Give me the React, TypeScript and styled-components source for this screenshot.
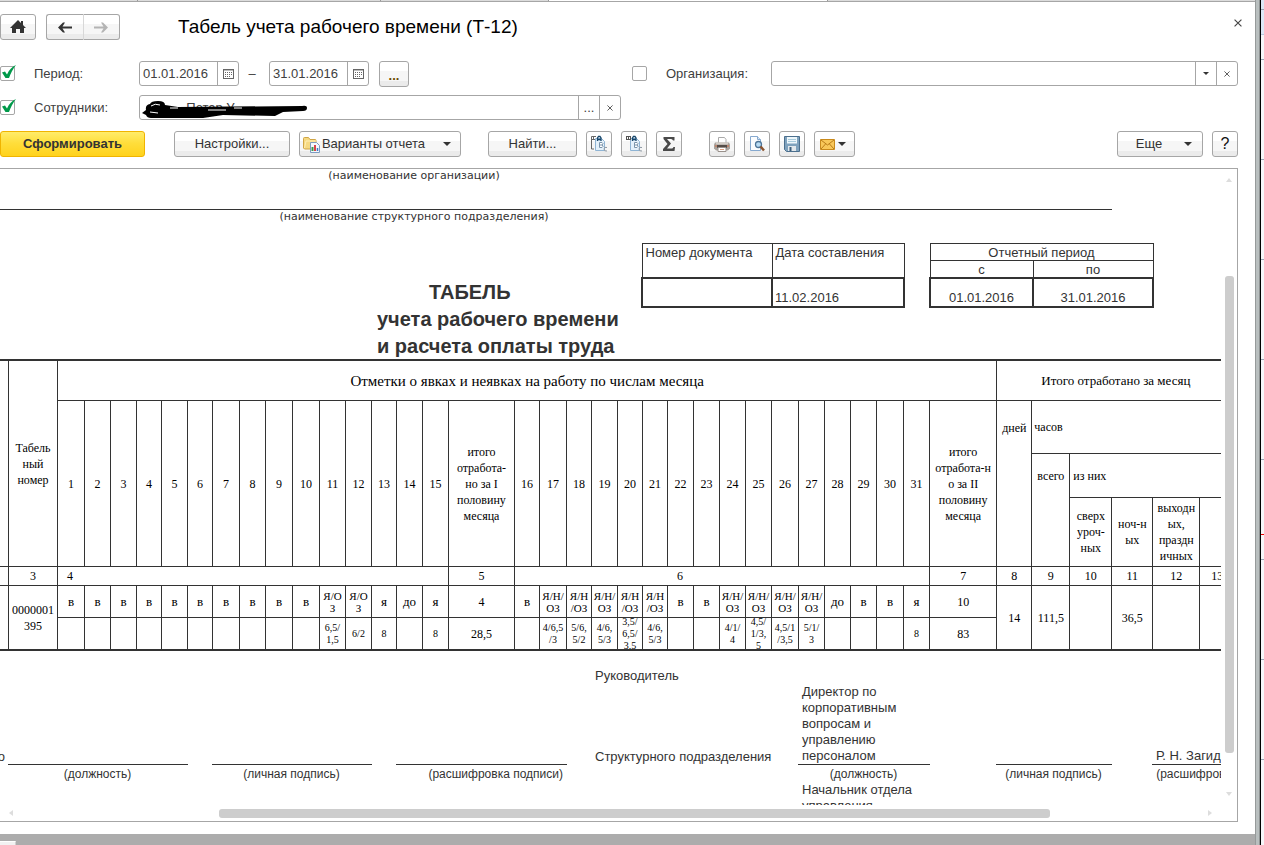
import React from "react";
import styled, { createGlobalStyle } from "styled-components";

const SANS = `"Liberation Sans", Arial, sans-serif`;
const SERIF = `"Liberation Serif", "Times New Roman", serif`;
const LINE = "#333";
const EDGE = "#a6a6a6";

const Global = createGlobalStyle`
  *, *::before, *::after { box-sizing: border-box; }
  html, body, #root { margin: 0; height: 100%; }
  body { background: #fff; color: #404040; font: 13px/16px ${SANS}; overflow: hidden; }
  button, input { font: inherit; color: inherit; margin: 0; }
`;

/* ---------- window frame ---------- */

const Desktop = styled.div`
  display: grid;
  grid-template-columns: minmax(0, 1fr) 6px 3px;
  height: 100vh;
`;

const AppColumn = styled.div`
  display: flex;
  flex-direction: column;
  min-height: 0;
`;

const TabStrip = styled.div`
  display: flex;
  flex: none;
  height: 2px;
  background: #dcdcdc;
  border-bottom: 1px solid ${EDGE};
`;

const TabEdge = styled.span<{ $w: number; $active?: boolean }>`
  width: ${(p) => p.$w}px;
  border-right: 1px solid #999;
  background: ${(p) => (p.$active ? "#fff" : "none")};
`;

const FrameEdge = styled.div`
  background: #b9bfbf;
  border-left: 1px solid #969a9a;
  border-right: 1px solid #000;
  box-shadow: inset -1px 0 #8f9494;
`;

const BackWindow = styled.div`
  background:
    linear-gradient(#e00, #e00) 0 534px / 100% 1px no-repeat,
    linear-gradient(#9aa5b5, #9aa5b5) 0 9px / 100% 1px no-repeat,
    linear-gradient(#b9c9e0, #b9c9e0) 0 34px / 100% 1px no-repeat,
    linear-gradient(#dde8f6, #dde8f6) 0 0 / 100% 34px no-repeat,
    repeating-linear-gradient(#f6f6f9 0 59px, #9aa5b5 59px 60px, #f6f6f9 60px 100px);
`;

const Page = styled.main`
  display: flex;
  flex: 1;
  flex-direction: column;
  min-height: 0;
  padding: 12px 17px 12px 0;
`;

const BottomBar = styled.footer`
  flex: none;
  display: flex;
  align-items: flex-end;
  height: 11px;
  background: #acacac;
`;

const BottomTab = styled.div`
  width: 16px;
  height: 4px;
  background: #f2f2f2;
  border-top: 1px solid #fff;
  border-right: 1px solid #d0d0d0;
`;

/* ---------- controls ---------- */

const Button = styled.button<{ $w?: number; $primary?: boolean }>`
  display: inline-flex;
  align-items: center;
  justify-content: center;
  flex: none;
  width: ${(p) => p.$w ?? 26}px;
  height: 26px;
  padding: 0;
  color: #333;
  border: 1px solid ${(p) => (p.$primary ? "#f0b400" : EDGE)};
  border-radius: 3px;
  background: ${(p) =>
    p.$primary
      ? "linear-gradient(#ffec6a, #ffde3c 45%, #ffd21c)"
      : "linear-gradient(#fff 0 38%, #f6f6f6 38% 80%, #ebebeb 80%)"};
  font-weight: ${(p) => (p.$primary ? "bold" : "normal")};
`;

const NavGroup = styled.div`
  display: flex;
  ${Button} + ${Button} { border-left: 1px solid #d8d8d8; border-radius: 0 3px 3px 0; }
  ${Button}:first-child { border-right: 0; border-radius: 3px 0 0 3px; }
`;

const Header = styled.header`
  display: flex;
  align-items: center;
  gap: 10px;
  height: 26px;
  margin-bottom: 21px;
`;

const Title = styled.h1`
  flex: 1;
  margin: 0 0 0 48px;
  color: #000;
  font-size: 19px;
  font-weight: normal;
  line-height: 22px;
  white-space: nowrap;
`;

const CloseButton = styled.button`
  align-self: flex-start;
  width: 9px;
  height: 18px;
  padding: 0;
  border: 0;
  background: none;
  line-height: 0;
  margin-right: -4px;
`;

const Filters = styled.form`
  display: grid;
  grid-template-columns: 632px minmax(0, 1fr);
  row-gap: 9px;
`;

const FilterRow = styled.div`
  display: flex;
  align-items: center;
  height: 25px;
`;

const FilterLabel = styled.label`
  width: 105px;
  margin-left: 19px;
`;

const TickWrap = styled.span`
  position: relative;
  flex: none;
  width: 15px;
  height: 15px;
  svg { position: absolute; left: 1px; top: -1px; pointer-events: none; }
`;

const TickBox = styled.input`
  display: block;
  appearance: none;
  width: 15px;
  height: 15px;
  border: 1px solid ${EDGE};
  border-radius: 2px;
  background: #fff;
`;

const Field = styled.div<{ $w?: number }>`
  position: relative;
  display: flex;
  flex: ${(p) => (p.$w ? "none" : "1")};
  width: ${(p) => (p.$w ? `${p.$w}px` : "auto")};
  height: 25px;
  border: 1px solid ${EDGE};
  border-radius: 3px;
  background: #fff;
`;

const FieldInput = styled.input`
  flex: 1;
  min-width: 0;
  padding: 0 3px;
  border: 0;
  background: none;
  outline: 0;
`;

const FieldButton = styled.button`
  display: flex;
  align-items: center;
  justify-content: center;
  width: 21px;
  padding: 0;
  border: 0;
  border-left: 1px solid ${EDGE};
  background: none;
`;

const Dash = styled.span`
  width: 30px;
  padding-right: 4px;
  text-align: center;
`;

const Redaction = styled.svg`
  position: absolute;
  left: 2px;
  top: 3px;
`;

const Toolbar = styled.div`
  display: flex;
  align-items: center;
  gap: 9px;
  margin: 11px 0;
`;

const Gap = styled.span<{ $w: number }>`
  width: ${(p) => p.$w}px;
`;

const Spacer = styled.span`
  flex: 1;
`;

const ButtonText = styled.span<{ $left: number; $right: number }>`
  padding: 0 ${(p) => p.$right}px 0 ${(p) => p.$left}px;
  white-space: nowrap;
`;

const HelpMark = styled.span`
  font-size: 16px;
  color: #111;
`;

const DotsMark = styled.span`
  padding-top: 4px;
  color: #6b4a00;
  font-weight: bold;
`;

/* ---------- sheet ---------- */

const SheetFrame = styled.section`
  display: grid;
  flex: 1;
  min-height: 0;
  grid-template-columns: minmax(0, 1fr) 16px;
  grid-template-rows: minmax(0, 1fr) 16px;
  border: 1px solid ${EDGE};
  border-left: 0;
`;

const Viewport = styled.div`
  overflow: hidden;
  color: #333;
`;

const Sheet = styled.div`
  width: 1296px;
`;

const OrgLine = styled.p<{ $rule?: boolean }>`
  width: 1112px;
  height: ${(p) => (p.$rule ? 41 : 33)}px;
  margin: 0;
  padding-right: 284px;
  border-bottom: ${(p) => (p.$rule ? `1px solid ${LINE}` : "0")};
  font: 11px/13px "DejaVu Sans", Verdana, sans-serif;
  text-align: center;
`;

const DocHead = styled.div`
  display: flex;
  align-items: flex-start;
  height: 116px;
`;

const DocTitle = styled.h2`
  width: 641px;
  margin: 0;
  padding: 36px 0 0 377px;
  font-size: 20px;
  line-height: 27px;
  white-space: nowrap;
`;

const DocTitleTop = styled.span`
  display: block;
  padding-left: 52px;
`;

const DocTable = styled.table<{ $w: number; $center?: boolean }>`
  table-layout: fixed;
  width: ${(p) => p.$w}px;
  margin-right: 24px;
  border-collapse: collapse;
  text-align: ${(p) => (p.$center ? "center" : "left")};
  th { padding: 1px 3px 0; border: 1px solid ${LINE}; font-weight: normal; line-height: 15px; text-align: inherit; vertical-align: top; }
  td { height: 29px; padding: 0 2px; border: 2px solid ${LINE}; vertical-align: bottom; }
`;

const TimeTable = styled.table`
  table-layout: fixed;
  width: 1235px;
  border-collapse: separate;
  border-spacing: 0;
  border-top: 2px solid ${LINE};
  border-bottom: 1px solid ${LINE};
  color: #000;
  font: 12px/16px ${SERIF};
  text-align: center;
`;

type CellProps = { $size?: number; $left?: number; $right?: number };

const Cell = styled.td<CellProps>`
  padding: 0 ${(p) => p.$right ?? 0}px 0 ${(p) => p.$left ?? 0}px;
  border-right: 1px solid ${LINE};
  border-bottom: 1px solid ${LINE};
  font-size: ${(p) => p.$size ?? 12}px;
  font-weight: normal;
  text-align: ${(p) => (p.$left ? "left" : "center")};
  white-space: pre;
`;

const TopCell = styled(Cell)<{ $top: number }>`
  padding-top: ${(p) => p.$top}px;
  vertical-align: top;
`;

const Row = styled.tr<{ $h: number }>`
  height: ${(p) => p.$h}px;
`;

const Clip = styled.div<{ $size: number }>`
  display: flex;
  align-items: center;
  justify-content: center;
  height: 31px;
  overflow: hidden;
  font-size: ${(p) => p.$size}px;
  line-height: 12px;
`;

const Signatures = styled.div`
  display: grid;
  grid-template-columns: 8px 180px 24px 160px 24px 171px 28px 203px 132px 66px 116px 40px 144px;
  padding-top: 17px;
  white-space: nowrap;
`;

const SignText = styled.div<{ $col: number; $row: number }>`
  grid-column: ${(p) => p.$col};
  grid-row: ${(p) => p.$row};
  align-self: end;
`;

const ClippedLetter = styled(SignText)`
  display: flex;
  justify-content: flex-end;
  padding-right: 3px;
`;

const SignLine = styled.div<{ $col: number }>`
  grid-column: ${(p) => p.$col};
  grid-row: 2;
  display: flex;
  align-items: flex-end;
  min-height: 81px;
  padding: 0 4px;
  border-bottom: 1px solid ${LINE};
  white-space: pre;
`;

const SignCaption = styled.div<{ $col: number; $end?: boolean }>`
  grid-column: ${(p) => p.$col};
  grid-row: 3;
  height: 17px;
  padding: 1px 4px 0 3px;
  font-size: 12px;
  text-align: ${(p) => (p.$end ? "right" : "center")};
`;

const NextPost = styled.div`
  grid-column: 9;
  grid-row: 4;
  padding-left: 4px;
`;

/* ---------- scroll bars ---------- */

const ScrollBar = styled.div<{ $vertical?: boolean }>`
  display: flex;
  flex-direction: ${(p) => (p.$vertical ? "column" : "row")};
  align-items: center;
  padding: ${(p) => (p.$vertical ? "8px 0 8px" : "0 8px")};
`;

const Thumb = styled.div<{ $grow: number; $vertical?: boolean }>`
  flex: ${(p) => p.$grow} 0 0;
  ${(p) => (p.$vertical ? "width" : "height")}: 9px;
  border-radius: 3px;
  background: #cdcdcd;
`;

const Track = styled.span<{ $grow: number }>`
  flex: ${(p) => p.$grow} 0 0;
`;

/* ---------- icons ---------- */

const Cross = ({ s = 7 }: { s?: number }) => (
  <svg width={s} height={s} viewBox="0 0 7 7">
    <path d="M.5.5l6 6M6.5.5l-6 6" stroke="#444" strokeWidth="1" fill="none" />
  </svg>
);

const Caret = ({ w = 8 }: { w?: number }) => (
  <svg width={w} height={w / 2} viewBox="0 0 8 4"><path d="M0 0h8L4 4z" fill="#333" /></svg>
);

const ScrollArrow = ({ turn }: { turn: number }) => (
  <svg width="6" height="6" viewBox="0 0 6 6">
    <path d="M0 5l3-4 3 4z" fill="#ddd" transform={`rotate(${turn} 3 3)`} />
  </svg>
);

const Tick = () => (
  <svg width="15" height="14" viewBox="0 0 15 14">
    <path d="M1 7.500L4 6.500l2 3C8 5 11 1.500 15 0c-3 4-5.500 8.500-7 13H4.500z" fill="#00994a" />
  </svg>
);

const HomeIcon = () => (
  <svg width="16" height="14" viewBox="0 0 16 14">
    <path d="M8 0l3 3V1h2v4l3 3h-2v5H10V9H6v4H2V8H0z" fill="#333" />
  </svg>
);

const Arrow = ({ color, flip }: { color: string; flip?: boolean }) => (
  <svg width="15" height="11" viewBox="0 0 15 11">
    <path
      d="M0 5.500L5 .5h2L4.500 4.500H14v2H4.500L7 10.500H5z"
      fill={color}
      transform={flip ? "translate(14 0) scale(-1 1)" : undefined}
    />
  </svg>
);

const CalendarIcon = () => (
  <svg width="11" height="10" viewBox="0 0 11 10" shapeRendering="crispEdges">
    <path d="M.5.5h10v9H.5z" fill="#fff" stroke="#666" />
    <path d="M1 1.500h9" stroke="#bbb" />
    <path d="M2 3.500h7M2 5.500h7M2 7.500h5" stroke="#666" strokeDasharray="1 1" />
  </svg>
);

const FolderIcon = () => (
  <svg width="17" height="17" viewBox="0 0 17 17">
    <path d="M.5 12V2.500q0-1 1-1h4l1.500 2H12q1 0 1 1V13H1.500z" fill="#f6d981" stroke="#d0a545" />
    <path d="M1.500 12l1.500-7h10" fill="none" stroke="#ffeeb5" />
    <path d="M7.500 6.500h6l3 3v7h-9z" fill="#f3f8fd" stroke="#7d9cc0" />
    <path d="M9.500 15v-4" stroke="#3a9a4a" strokeWidth="2" />
    <path d="M12 15V9" stroke="#d8434a" strokeWidth="2" />
    <path d="M14.500 15v-3" stroke="#3c74c4" strokeWidth="1.500" />
  </svg>
);

const GroupIcon = ({ plus }: { plus?: boolean }) => (
  <svg width="18" height="18" viewBox="0 0 18 18">
    <path d="M5.500 3.500h6l3 3v9h-9z" fill="#e4f1fb" stroke="#8fb4d4" />
    {plus ? (
      <path d="M1 1.500h5M1 4.500h5M1.500 1v4M3.500 1v4M5.500 1v4" stroke="#555" fill="none" />
    ) : (
      <path d="M6 1.500H1.500V14H4M1 4.500h4M3.500 2v3" stroke="#666" fill="none" />
    )}
    <path d="M7.500 6V3l1-1.500h1.500l1 1.500v3M7.500 4.500h3" stroke="#16466b" strokeWidth="1.300" fill="none" />
    <path d="M9.500 7.500h2.500q2 1 0 2.500 2.500 1 0 2.500H9.500zM10 10h2" stroke="#7a94ab" fill="#fff" />
    <path d="M17 12.500q-3-1-3 1.500t3 2" stroke="#8f9aa5" fill="none" />
  </svg>
);

const SigmaIcon = () => (
  <svg width="12" height="14" viewBox="0 0 12 14">
    <path d="M.5 0h11v3.500H10Q9.500 2 8 2H4l4 4.500L4 11.500h4.500q1.500 0 2-1.500H12l-.5 4H0v-2l4.500-5L.5 2z" fill="#4a4a4a" />
  </svg>
);

const PrintIcon = () => (
  <svg width="16" height="15" viewBox="0 0 16 15">
    <path d="M4.500 6V.5h6l1.500 2V6" fill="#fff" stroke="#a9a9a9" />
    <path d="M1 5.500h14l1 2v4l-2 2H2l-2-2v-4z" fill="#a9a39d" />
    <path d="M2 5.500h12v2H2z" fill="#d4cec8" />
    <path d="M3 8h10v3H3z" fill="#554d48" />
    <path d="M4 10.500h8v4H4z" fill="#fff" stroke="#99908a" />
    <path d="M1 9h2M13 9h2" stroke="#d06840" />
    <path d="M6 12.500h4" stroke="#e0a080" />
  </svg>
);

const PreviewIcon = () => (
  <svg width="16" height="16" viewBox="0 0 16 16">
    <path d="M1.500.5h7l3 3v11h-10z" fill="#fbfdff" stroke="#86a9cf" />
    <path d="M8.500.5v3h3" fill="#d9e8f6" stroke="#86a9cf" />
    <circle cx="9.500" cy="8.500" r="3" fill="#b9dcf4" stroke="#4e7598" strokeWidth="1.300" />
    <path d="M11.500 10.500l3.500 4" stroke="#8a5430" strokeWidth="2.500" />
  </svg>
);

const SaveIcon = () => (
  <svg width="16" height="16" viewBox="0 0 16 16">
    <path d="M.5.5h15v15h-13l-2-2z" fill="#7fa2bd" stroke="#4b6f8d" />
    <path d="M3 1h10v6.500H3z" fill="#eef7fb" />
    <path d="M4 3.500h8M4 5.500h8" stroke="#a8cbdc" />
    <path d="M4 10h8v5H4z" fill="#e2e8ec" />
    <path d="M5.500 11h2v4h-2z" fill="#3d5f7c" />
  </svg>
);

const MailIcon = () => (
  <svg width="15" height="11" viewBox="0 0 15 11">
    <path d="M.5.5h14v10H.5z" fill="#f8c75a" stroke="#c98a1c" />
    <path d="M1 1l6.500 5L14 1M1 10l4.500-5M14 10L9.500 5" fill="none" stroke="#b97c18" />
  </svg>
);

/* ---------- data ---------- */

const colWidths = [
  9, 49, 27, 26, 26, 25, 26, 25, 27, 26, 27, 27, 26, 26, 25, 26, 26, 66, 25, 27, 25, 26, 25, 25,
  26, 26, 26, 26, 27, 26, 26, 26, 27, 26, 67, 35, 38, 42, 41, 47, 35,
];

const firstHalf = Array.from({ length: 15 }, (_, i) => String(i + 1));
const secondHalf = Array.from({ length: 16 }, (_, i) => String(i + 16));

const codes1 = ["в", "в", "в", "в", "в", "в", "в", "в", "в", "в", "Я/О\nЗ", "Я/О\nЗ", "я", "до", "я"];
const codes2 = [
  "в", "Я/Н/\nОЗ", "Я/Н\n/ОЗ", "Я/Н/\nОЗ", "Я/Н\n/ОЗ", "Я/Н\n/ОЗ", "в", "в",
  "Я/Н/\nОЗ", "Я/Н/\nОЗ", "Я/Н/\nОЗ", "Я/Н/\nОЗ", "до", "в", "в", "я",
];
const hours1 = ["", "", "", "", "", "", "", "", "", "", "6,5/\n1,5", "6/2", "8", "", "8"];
const hours2 = [
  "", "4/6,5\n/3", "5/6,\n5/2", "4/6,\n5/3", "3,5/\n6,5/\n3,5", "4/6,\n5/3", "", "",
  "4/1/\n4", "4,5/\n1/3,\n5", "4,5/1\n/3,5", "5/1/\n3", "", "", "", "8",
];

const DayHeads = ({ days }: { days: string[] }) => (
  <>{days.map((d) => <Cell as="th" key={d} rowSpan={3}>{d}</Cell>)}</>
);

const Marks = ({ items, hours }: { items: string[]; hours?: boolean }) => (
  <>
    {items.map((t, i) => (
      <Cell key={i}><Clip $size={hours ? 10 : t.includes("/") ? 11 : 13}>{t}</Clip></Cell>
    ))}
  </>
);

const DateField = ({ id, value, label }: { id: string; value: string; label?: string }) => (
  <Field $w={100}>
    <FieldInput id={id} aria-label={label} defaultValue={value} />
    <FieldButton type="button" aria-label="Выбрать дату"><CalendarIcon /></FieldButton>
  </Field>
);

export default function App() {
  return (
    <>
      <Global />
      <Desktop>
        <AppColumn>
          <TabStrip>
            <TabEdge $w={138} />
            <TabEdge $w={243} />
            <TabEdge $w={168} />
            <TabEdge $w={279} $active />
          </TabStrip>
          <Page>
            <Header>
              <Button $w={36} aria-label="Домой"><HomeIcon /></Button>
              <NavGroup>
                <Button $w={37} aria-label="Назад"><Arrow color="#333" /></Button>
                <Button $w={37} aria-label="Вперед"><Arrow color="#b4b4b4" flip /></Button>
              </NavGroup>
              <Title>Табель учета рабочего времени (Т-12)</Title>
              <CloseButton aria-label="Закрыть"><Cross s={8} /></CloseButton>
            </Header>

            <Filters onSubmit={(e) => e.preventDefault()}>
              <FilterRow>
                <TickWrap><TickBox type="checkbox" aria-label="Использовать период" defaultChecked /><Tick /></TickWrap>
                <FilterLabel htmlFor="from">Период:</FilterLabel>
                <DateField id="from" value="01.01.2016" />
                <Dash>–</Dash>
                <DateField id="to" value="31.01.2016" label="Конец периода" />
                <Gap $w={10} />
                <Button type="button" $w={30} aria-label="Выбрать период"><DotsMark>...</DotsMark></Button>
              </FilterRow>
              <FilterRow>
                <TickWrap><TickBox type="checkbox" aria-label="Использовать организацию" /></TickWrap>
                <FilterLabel htmlFor="org">Организация:</FilterLabel>
                <Field>
                  <FieldInput id="org" />
                  <FieldButton type="button" aria-label="Список"><Caret w={6} /></FieldButton>
                  <FieldButton type="button" aria-label="Очистить"><Cross s={6} /></FieldButton>
                </Field>
              </FilterRow>
              <FilterRow>
                <TickWrap><TickBox type="checkbox" aria-label="Использовать сотрудников" defaultChecked /><Tick /></TickWrap>
                <FilterLabel htmlFor="staff">Сотрудники:</FilterLabel>
                <Field $w={482}>
                  <FieldInput id="staff" defaultValue={"\u00a0\u00a0\u00a0\u00a0\u00a0\u00a0\u00a0\u00a0\u00a0\u00a0\u00a0\u00a0Петар У"} />
                  <Redaction width="170" height="19" viewBox="0 0 170 19">
                    <path d="M0 14l4-3Q3 6 8 5q1-3 8-3 7 0 7 4l13 2 124-1q5-1 5 2 0 3-4 3l-20 1-8 4-52-1-20 3H9q-4 0-5-3z" fill="#000" />
                    <path d="M9 7q4-3 9-1M8 13l8 1M28 9h8M66 11h18M92 9h8" stroke="#fff" fill="none" />
                  </Redaction>
                  <FieldButton type="button" aria-label="Выбрать">...</FieldButton>
                  <FieldButton type="button" aria-label="Очистить"><Cross s={6} /></FieldButton>
                </Field>
              </FilterRow>
            </Filters>

            <Toolbar>
              <Button $w={145} $primary>Сформировать</Button>
              <Gap $w={11} />
              <Button $w={116}>Настройки...</Button>
              <Button $w={162}>
                <FolderIcon /><ButtonText $left={2} $right={18}>Варианты отчета</ButtonText><Caret /><Gap $w={6} />
              </Button>
              <Gap $w={9} />
              <Button $w={89}>Найти...</Button>
              <Button aria-label="Развернуть группы"><GroupIcon /></Button>
              <Button aria-label="Свернуть группы"><GroupIcon plus /></Button>
              <Button aria-label="Сумма"><SigmaIcon /></Button>
              <Gap $w={9} />
              <Button aria-label="Печать"><PrintIcon /></Button>
              <Button aria-label="Просмотр"><PreviewIcon /></Button>
              <Button aria-label="Сохранить"><SaveIcon /></Button>
              <Button $w={41} aria-label="Отправить"><MailIcon /><Gap $w={3} /><Caret /><Gap $w={4} /></Button>
              <Spacer />
              <Button $w={86}><ButtonText $left={8} $right={22}>Еще</ButtonText><Caret /></Button>
              <Button aria-label="Справка"><HelpMark>?</HelpMark></Button>
            </Toolbar>

            <SheetFrame>
              <Viewport>
                <Sheet>
                  <OrgLine $rule>(наименование организации)</OrgLine>
                  <OrgLine>(наименование структурного подразделения)</OrgLine>
                  <DocHead>
                    <DocTitle>
                      <DocTitleTop>ТАБЕЛЬ</DocTitleTop>
                      учета рабочего времени<br />
                      и расчета оплаты труда
                    </DocTitle>
                    <DocTable $w={264}>
                      <colgroup><col width="130" /><col /></colgroup>
                      <thead><Row $h={34}><th>Номер документа</th><th>Дата составления</th></Row></thead>
                      <tbody><tr><td /><td>11.02.2016</td></tr></tbody>
                    </DocTable>
                    <DocTable $w={225} $center>
                      <colgroup><col width="103" /><col /></colgroup>
                      <thead>
                        <Row $h={17}><th colSpan={2}>Отчетный период</th></Row>
                        <Row $h={17}><th>с</th><th>по</th></Row>
                      </thead>
                      <tbody><tr><td>01.01.2016</td><td>31.01.2016</td></tr></tbody>
                    </DocTable>
                  </DocHead>

                  <TimeTable>
                    <colgroup>{colWidths.map((w, i) => <col key={i} width={w} />)}</colgroup>
                    <thead>
                      <Row $h={40}>
                        <Cell rowSpan={4} />
                        <Cell as="th" rowSpan={4}>{"Табель\nный\nномер"}</Cell>
                        <Cell as="th" colSpan={33} $size={15}>Отметки о явках и неявках на работу по числам месяца</Cell>
                        <Cell as="th" colSpan={6} $size={13}>Итого отработано за месяц</Cell>
                      </Row>
                      <Row $h={53}>
                        <DayHeads days={firstHalf} />
                        <Cell as="th" rowSpan={3}>{"итого\nотработа-\nно за I\nполовину\nмесяца"}</Cell>
                        <DayHeads days={secondHalf} />
                        <Cell as="th" rowSpan={3}>{"итого\nотработа-н\nо за II\nполовину\nмесяца"}</Cell>
                        <TopCell as="th" rowSpan={3} $top={19}>дней</TopCell>
                        <Cell as="th" colSpan={5} $left={2}>часов</Cell>
                      </Row>
                      <Row $h={44}>
                        <TopCell as="th" rowSpan={2} $top={14}>всего</TopCell>
                        <Cell as="th" colSpan={4} $left={3}>из них</Cell>
                      </Row>
                      <Row $h={69}>
                        <Cell as="th">{"сверх\nуроч-\nных"}</Cell>
                        <Cell as="th">{"ноч-н\nых"}</Cell>
                        <Cell as="th">{"выходн\nых,\nпраздн\nичных"}</Cell>
                        <Cell />
                      </Row>
                      <Row $h={19}>
                        <Cell />
                        <Cell>3</Cell>
                        <Cell colSpan={15} $left={9}>4</Cell>
                        <Cell>5</Cell>
                        <Cell colSpan={16} $right={84}>6</Cell>
                        {["7", "8", "9", "10", "11", "12", "13"].map((n) => <Cell key={n}>{n}</Cell>)}
                      </Row>
                    </thead>
                    <tbody>
                      <Row $h={32}>
                        <Cell rowSpan={2} />
                        <Cell rowSpan={2}>{"0000001\n395"}</Cell>
                        <Marks items={codes1} />
                        <Cell>4</Cell>
                        <Marks items={codes2} />
                        <Cell>10</Cell>
                        <Cell rowSpan={2}>14</Cell>
                        <Cell rowSpan={2}>111,5</Cell>
                        <Cell rowSpan={2} />
                        <Cell rowSpan={2}>36,5</Cell>
                        <Cell rowSpan={2} />
                        <Cell rowSpan={2} />
                      </Row>
                      <Row $h={32}>
                        <Marks items={hours1} hours />
                        <Cell>28,5</Cell>
                        <Marks items={hours2} hours />
                        <Cell>83</Cell>
                      </Row>
                    </tbody>
                  </TimeTable>

                  <Signatures>
                    <SignText $col={8} $row={1}>Руководитель</SignText>
                    <ClippedLetter $col={1} $row={2}>о</ClippedLetter>
                    <SignLine $col={2} />
                    <SignLine $col={4} />
                    <SignLine $col={6} />
                    <SignText $col={8} $row={2}>Структурного подразделения</SignText>
                    <SignLine $col={9}>{"Директор по\nкорпоративным\nвопросам и\nуправлению\nперсоналом"}</SignLine>
                    <SignLine $col={11} />
                    <SignLine $col={13}>Р. Н. Загид</SignLine>
                    <SignCaption $col={2}>(должность)</SignCaption>
                    <SignCaption $col={4}>(личная подпись)</SignCaption>
                    <SignCaption $col={6} $end>(расшифровка подписи)</SignCaption>
                    <SignCaption $col={9}>(должность)</SignCaption>
                    <SignCaption $col={11}>(личная подпись)</SignCaption>
                    <SignCaption $col={13}>(расшифровка подписи)</SignCaption>
                    <NextPost>Начальник отдела<br />управления</NextPost>
                  </Signatures>
                </Sheet>
              </Viewport>
              <ScrollBar $vertical>
                <ScrollArrow turn={0} />
                <Track $grow={93} />
                <Thumb $grow={477} $vertical />
                <Track $grow={38} />
                <ScrollArrow turn={180} />
              </ScrollBar>
              <ScrollBar>
                <ScrollArrow turn={-90} />
                <Track $grow={205} />
                <Thumb $grow={830} />
                <Track $grow={157} />
                <ScrollArrow turn={90} />
              </ScrollBar>
            </SheetFrame>
          </Page>
          <BottomBar><BottomTab /></BottomBar>
        </AppColumn>
        <FrameEdge />
        <BackWindow />
      </Desktop>
    </>
  );
}
